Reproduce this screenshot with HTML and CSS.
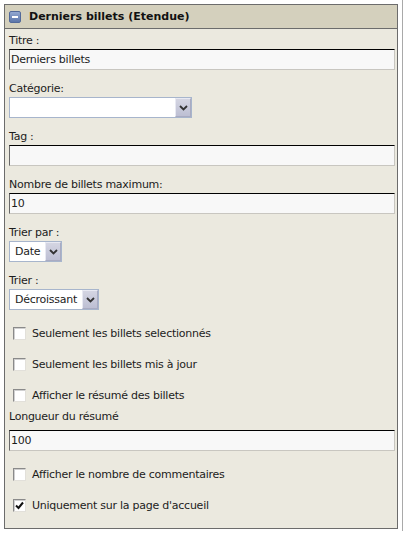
FILE: index.html
```html
<!DOCTYPE html>
<html lang="fr">
<head>
<meta charset="utf-8">
<title>Derniers billets (Etendue)</title>
<link rel="stylesheet" href="styles.css">
</head>
<body>
<div class="frame">
  <div class="panel">
    <div class="head">
      <span class="toggle"><span class="minus"></span></span>
      <span class="title">Derniers billets (Etendue)</span>
    </div>
    <div class="body">
      <div class="label">Titre :</div>
      <div class="input wide">Derniers billets</div>

      <div class="label gap">Catégorie:</div>
      <div class="select sel-cat"><span class="sel-text"></span><span class="sel-btn"><svg width="9" height="6" viewBox="0 0 9 6"><path d="M1 1 L4.5 4.5 L8 1" fill="none" stroke="#333" stroke-width="1.8"/></svg></span></div>

      <div class="label gap">Tag :</div>
      <div class="input wide"></div>

      <div class="label gap">Nombre de billets maximum:</div>
      <div class="input wide">10</div>

      <div class="label gap">Trier par :</div>
      <div class="select"><span class="sel-text">Date</span><span class="sel-btn"><svg width="9" height="6" viewBox="0 0 9 6"><path d="M1 1 L4.5 4.5 L8 1" fill="none" stroke="#333" stroke-width="1.8"/></svg></span></div>

      <div class="label gap">Trier :</div>
      <div class="select"><span class="sel-text">Décroissant</span><span class="sel-btn"><svg width="9" height="6" viewBox="0 0 9 6"><path d="M1 1 L4.5 4.5 L8 1" fill="none" stroke="#333" stroke-width="1.8"/></svg></span></div>

      <div class="check first"><span class="box"></span><span>Seulement les billets selectionnés</span></div>
      <div class="check"><span class="box"></span><span>Seulement les billets mis à jour</span></div>
      <div class="check"><span class="box"></span><span>Afficher le résumé des billets</span></div>

      <div class="label after-check">Longueur du résumé</div>
      <div class="input wide short-gap">100</div>

      <div class="check first"><span class="box"></span><span>Afficher le nombre de commentaires</span></div>
      <div class="check"><span class="box checked"><svg width="11" height="11" viewBox="0 0 11 11"><path d="M2 5.5 L4.5 8 L9 2.5" fill="none" stroke="#111" stroke-width="2"/></svg></span><span>Uniquement sur la page d'accueil</span></div>
    </div>
  </div>
</div>
</body>
</html>
```

FILE: styles.css
```css
html, body {
  margin: 0;
  padding: 0;
  background: #ffffff;
}

body {
  font-family: "DejaVu Sans", Verdana, sans-serif;
  font-size: 11px;
  color: #1c1c1c;
  letter-spacing: -0.25px;
}

.frame {
  width: 403px;
  height: 531px;
  box-sizing: border-box;
  padding: 4px 0 0 4px;
  border-right: 1px solid #a9a9a9;
}

.panel {
  width: 394px;
  box-sizing: border-box;
  border: 1px solid #6c6c6c;
  background: #ebe9df;
}

.head {
  height: 23px;
  display: flex;
  align-items: center;
  padding-left: 4px;
  background: #d4d0bd;
  border-bottom: 1px solid #6c6c6c;
}

.toggle {
  width: 12px;
  height: 12px;
  box-sizing: border-box;
  border-radius: 2px;
  background: linear-gradient(#93a8d0, #5b75aa);
  border: 1px solid #52699a;
  display: flex;
  align-items: center;
  justify-content: center;
  margin-right: 8px;
}

.minus {
  width: 6px;
  height: 2px;
  background: #ffffff;
}

.title {
  font-weight: bold;
  font-size: 11px;
  letter-spacing: 0;
  color: #111;
  line-height: 23px;
}

.body {
  display: flex;
  flex-direction: column;
  align-items: flex-start;
  padding: 4px 0 7px 4px;
}

.label {
  line-height: 16px;
  height: 16px;
}

.gap {
  margin-top: 11px;
}

.input {
  height: 21px;
  box-sizing: border-box;
  background: #f8f8f8;
  border-style: solid;
  border-width: 1px;
  border-color: #000 #c8c6c0 #c8c6c0 #6a6a6a;
  padding-left: 1px;
  line-height: 19px;
}

.wide {
  width: 386px;
}

.select {
  height: 21px;
  box-sizing: border-box;
  display: flex;
  align-items: stretch;
  background: #ffffff;
  border: 1px solid #a7b5cc;
}

.sel-cat {
  width: 183px;
}

.sel-text {
  flex: 1;
  padding: 0 5px 0 5px;
  line-height: 19px;
}

.sel-btn {
  width: 16px;
  box-sizing: border-box;
  background: linear-gradient(#d4d5e2, #bdbfd3);
  border: 1px solid #e8e9f2;
  border-right-color: #a9abc2;
  border-bottom-color: #a9abc2;
  display: flex;
  align-items: center;
  justify-content: center;
}

.check {
  height: 31px;
  display: flex;
  align-items: center;
  padding-left: 4px;
}

.check.first {
  margin-top: 8px;
}

.box {
  width: 13px;
  height: 13px;
  box-sizing: border-box;
  background: #ffffff;
  border-style: solid;
  border-width: 1px;
  border-color: #8a8a8a #e2e0da #e2e0da #8a8a8a;
  box-shadow: inset 1px 1px 0 #d0d0d0;
  margin-right: 6px;
  display: flex;
  align-items: center;
  justify-content: center;
}

.after-check {
  margin-top: -2px;
}

.short-gap {
  margin-top: 5px;
}
```
